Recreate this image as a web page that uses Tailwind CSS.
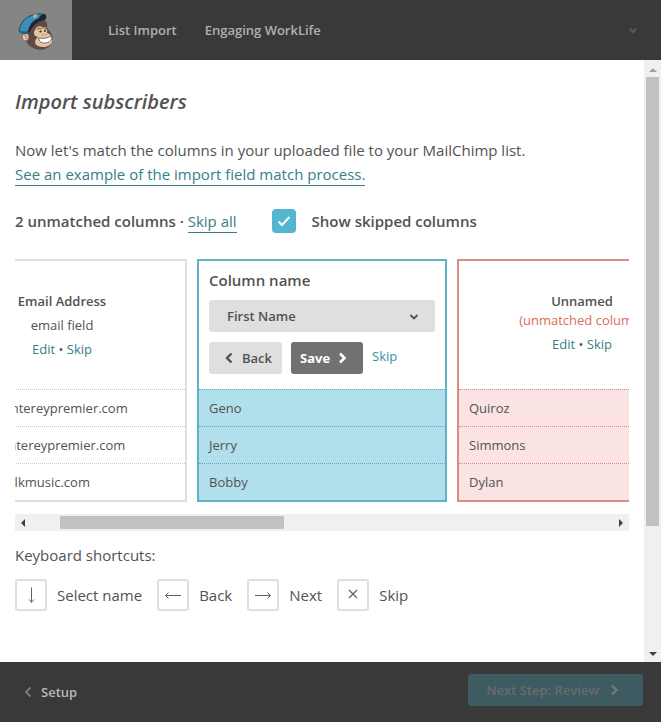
<!DOCTYPE html>
<html lang="en">
<head>
<meta charset="UTF-8">
<meta name="viewport" content="width=device-width, initial-scale=1.0">
<title>Import subscribers</title>
<script src="https://cdn.jsdelivr.net/npm/@tailwindcss/browser@4"></script>
</head>
<body class="flex flex-col h-screen bg-white text-[#525252] text-[15px] leading-6 font-['Open_Sans',sans-serif]">

<header class="flex items-center h-15 shrink-0 bg-[#393939] text-[#b0b0b0] text-[13px] font-semibold">
  <a href="#" aria-label="Home" class="flex items-center justify-center w-18 h-full bg-[#858585]">
    <svg class="w-9 h-10" viewBox="0 0 36 40">
      <path d="M10 16 L24 10 C28 10 30 13 29 17 C30 21 34 22 34.500 27 C35.500 35 29 40 22 39.800 C13 39 9 34 7 29 Z" fill="#604b43"/>
      <path d="M17 20 C19 15 24 16 25 18 C28 16 30 19 29 23 C33 24 35 28 34 32 C32 37 25 38 20 36 C16 34 16 30 20 27 C16 26 15 23 17 20 Z" fill="#e5c4a6"/>
      <ellipse cx="7.500" cy="27" rx="3.400" ry="3.900" fill="#e5c4a6" stroke="#604b43" stroke-width="0.600"/>
      <path d="M6 26 C7.500 24.500 9 26 8.200 29" fill="none" stroke="#a17d69" stroke-width="1"/>
      <path d="M1 21 C2 13 7 7 15 5 C20 3.500 25 3.500 27 5 L26 8 C18 10 12 15 11 23 C8 24 3 24 1 21 Z" fill="#398fb9" stroke="#253343" stroke-width="0.800"/>
      <path d="M1 20 C4 22 7 22 11 20 L11 23 C8 25 3 24.500 1 22 Z" fill="#266181"/>
      <path d="M10 21.500 C11 15 15 10 21 8 C21 6 24 4 27 4.200 C29 6 29 9 26 10.500 C20 11 15 15 11 23 Z" fill="#1c2435"/>
      <path d="M15 5 L19 4 L18.500 7.500 L15.500 8 Z" fill="#c5b481"/>
      <path d="M19 19.500 Q21 17.500 24 19 M26 19 Q28 18 29 19.500" fill="none" stroke="#8d6b55" stroke-width="1.200"/>
      <ellipse cx="22.500" cy="21.500" rx="1.200" ry="0.900" fill="#493629"/>
      <ellipse cx="27" cy="21" rx="1" ry="0.900" fill="#493629"/>
      <path d="M24.500 25 H25.500 M27.500 24.500 H28.500" stroke="#795744" stroke-width="1"/>
      <path d="M20.500 28 C25 29 30 28 33.500 26 C34.500 31 30 33.500 25 33 C22 32.500 21 30.500 20.500 28 Z" fill="#fff" stroke="#674c40" stroke-width="0.800"/>
    </svg>
  </a>
  <nav class="flex gap-7 ml-9">
    <a href="#">List Import</a>
    <a href="#">Engaging WorkLife</a>
  </nav>
  <button type="button" aria-label="Account menu" class="ml-auto mr-6">
    <svg class="w-2 h-2" viewBox="0 0 8 8" fill="none" stroke="#595959" stroke-width="2"><path d="M0.500 2.500 L4 6 L7.500 2.500"/></svg>
  </button>
</header>

<div class="flex flex-1 min-h-0">
  <main class="flex-1 min-w-0 px-[15px] pt-[26px]">
    <h1 class="text-[20px] leading-8 font-semibold italic">Import subscribers</h1>

    <p class="mt-5">Now let's match the columns in your uploaded file to your MailChimp list.<br>
      <a href="#" class="inline-block leading-[22px] text-[#358085] border-b border-[#358085]">See an example of the import field match process.</a></p>

    <div class="flex items-center mt-[23px] font-semibold">
      <p>2 unmatched columns <span>·</span> <a href="#" class="inline-block leading-[22px] font-normal text-[#358085] border-b border-[#358085]">Skip all</a></p>
      <label class="flex items-center gap-4 ml-[35px]">
        <span class="relative w-6 h-6">
          <input type="checkbox" checked class="block appearance-none w-6 h-6 rounded bg-[#54b5d1]">
          <svg class="absolute inset-0 w-6 h-6 pointer-events-none" viewBox="0 0 24 24" fill="none" stroke="#fff" stroke-width="2"><path d="M6.500 12.500 L10 16 L17.500 8"/></svg>
        </span>
        Show skipped columns
      </label>
    </div>

    <!-- imported columns, centred on the one being edited -->
    <div class="flex justify-center gap-2.5 mt-[26px] overflow-hidden text-[13px]">
      <section class="w-[250px] shrink-0 border-2 border-[#dfdfdf]">
        <table class="w-full border-separate border-spacing-0">
          <thead>
            <tr><th class="h-32 p-0 align-middle font-normal">
              <div class="font-semibold">Email Address</div>
              <div>email field</div>
              <div><a href="#" class="text-[#358085]">Edit</a> • <a href="#" class="text-[#358085]">Skip</a></div>
            </th></tr>
          </thead>
          <tbody>
            <tr><td class="h-[37px] px-2.5 py-0 border-t border-dotted border-[#c8c8c8]">geno@montereypremier.com</td></tr>
            <tr><td class="h-[37px] px-2.5 py-0 border-t border-dotted border-[#c8c8c8]">jerry@montereypremier.com</td></tr>
            <tr><td class="h-[37px] px-2.5 py-0 border-t border-dotted border-[#c8c8c8]">bobby@polkmusic.com</td></tr>
          </tbody>
        </table>
      </section>

      <section class="w-[250px] shrink-0 border-2 border-[#5fb2c8]">
        <table class="w-full border-separate border-spacing-0">
          <thead>
            <tr><th class="h-32 px-2.5 pt-[7px] pb-0 align-top text-left font-normal">
              <label for="column-name" class="block text-[15px] font-semibold">Column name</label>
              <div class="relative mt-2">
                <select id="column-name" class="block appearance-none w-full h-8 pl-[18px] rounded-[3px] bg-[#dfdfdf] font-semibold">
                  <option>First Name</option>
                </select>
                <svg class="absolute right-4 top-3 w-2.5 h-2.5 pointer-events-none" viewBox="0 0 10 10" fill="none" stroke="#525252" stroke-width="1.800"><path d="M1.500 3 L5 6.500 L8.500 3"/></svg>
              </div>
              <div class="flex mt-2.5 gap-[9px]">
                <button type="button" class="flex items-center gap-[9px] h-8 pl-4 pr-2.5 rounded-[3px] bg-[#dfdfdf] font-semibold">
                  <svg class="w-2 h-3" viewBox="0 0 8 12" fill="none" stroke="#525252" stroke-width="2.400"><path d="M6.500 1.500 L2 6 L6.500 10.500"/></svg>
                  Back
                </button>
                <button type="button" class="flex items-center gap-[9px] h-8 pl-[9px] pr-4 rounded-[3px] bg-[#717171] text-white font-bold">
                  Save
                  <svg class="w-2 h-3" viewBox="0 0 8 12" fill="none" stroke="#fff" stroke-width="2.600"><path d="M1 1.500 L5.500 6 L1 10.500"/></svg>
                </button>
                <a href="#" class="mt-0.5 text-[#358fa5]">Skip</a>
              </div>
            </th></tr>
          </thead>
          <tbody>
            <tr><td class="h-[37px] px-2.5 py-0 bg-[#b1dfec] border-t border-dotted border-[#5fa9bd]">Geno</td></tr>
            <tr><td class="h-[37px] px-2.5 py-0 bg-[#b1dfec] border-t border-dotted border-[#5fa9bd]">Jerry</td></tr>
            <tr><td class="h-[37px] px-2.5 py-0 bg-[#b1dfec] border-t border-dotted border-[#5fa9bd]">Bobby</td></tr>
          </tbody>
        </table>
      </section>

      <section class="w-[250px] shrink-0 border-2 border-[#d98c80]">
        <table class="w-full border-separate border-spacing-0">
          <thead>
            <tr><th class="h-32 px-0 pt-7 pb-0 align-top font-normal">
              <div class="font-semibold">Unnamed</div>
              <div class="leading-[14px] text-[#dc6c5a]">(unmatched column)</div>
              <div class="mt-[5px]"><a href="#" class="text-[#358085]">Edit</a> • <a href="#" class="text-[#358085]">Skip</a></div>
            </th></tr>
          </thead>
          <tbody>
            <tr><td class="h-[37px] px-2.5 py-0 bg-[#fae3e2] border-t border-dotted border-[#d98c80]">Quiroz</td></tr>
            <tr><td class="h-[37px] px-2.5 py-0 bg-[#fae3e2] border-t border-dotted border-[#d98c80]">Simmons</td></tr>
            <tr><td class="h-[37px] px-2.5 py-0 bg-[#fae3e2] border-t border-dotted border-[#d98c80]">Dylan</td></tr>
          </tbody>
        </table>
      </section>
    </div>

    <div class="flex items-center justify-between h-[17px] mt-3 px-1.5 bg-[#f0f0f0]">
      <svg class="w-1 h-2" viewBox="0 0 4 8" fill="#404040"><path d="M4 0 V8 L0 4 Z"/></svg>
      <div class="flex-1 pl-[35px]"><div class="w-[40%] h-[13px] bg-[#c1c1c1]"></div></div>
      <svg class="w-1 h-2" viewBox="0 0 4 8" fill="#404040"><path d="M0 0 V8 L4 4 Z"/></svg>
    </div>

    <h2 class="mt-3">Keyboard shortcuts:</h2>
    <ul class="flex gap-[15px] mt-3">
      <li class="flex items-center gap-2.5">
        <kbd class="flex items-center justify-center w-8 h-8 border-2 border-[#dfdfdf] rounded-[3px]">
          <svg class="w-4 h-4" viewBox="0 0 16 16" fill="none" stroke="#606060"><path d="M8.500 0.500 V15.500 M6 12.500 L8.500 15.200 L11 12.500"/></svg>
        </kbd>
        Select name
      </li>
      <li class="flex items-center gap-2.5">
        <kbd class="flex items-center justify-center w-8 h-8 border-2 border-[#dfdfdf] rounded-[3px]">
          <svg class="w-4 h-4" viewBox="0 0 16 16" fill="none" stroke="#606060"><path d="M16 8.500 H0.500 M3.500 5.500 L0.500 8.500 L3.500 11.500"/></svg>
        </kbd>
        Back
      </li>
      <li class="flex items-center gap-2.5">
        <kbd class="flex items-center justify-center w-8 h-8 border-2 border-[#dfdfdf] rounded-[3px]">
          <svg class="w-4 h-4" viewBox="0 0 16 16" fill="none" stroke="#606060"><path d="M0 8.500 H15.500 M12.500 5.500 L15.500 8.500 L12.500 11.500"/></svg>
        </kbd>
        Next
      </li>
      <li class="flex items-center gap-2.5">
        <kbd class="flex items-center justify-center w-8 h-8 border-2 border-[#dfdfdf] rounded-[3px]">
          <svg class="w-4 h-4" viewBox="0 0 16 16" fill="none" stroke="#606060" stroke-width="1.200"><path d="M4 3 L12 11 M12 3 L4 11"/></svg>
        </kbd>
        Skip
      </li>
    </ul>
  </main>

  <div class="flex flex-col items-center w-[17px] py-1.5 bg-[#f0f0f0]">
    <svg class="w-2 h-1 mt-0.5" viewBox="0 0 8 4" fill="#a0a0a0"><path d="M0 4 H8 L4 0 Z"/></svg>
    <div class="flex-1 w-[13px] pt-[5px]"><div class="h-[78%] bg-[#c1c1c1]"></div></div>
    <svg class="w-2 h-1" viewBox="0 0 8 4" fill="#404040"><path d="M0 0 H8 L4 4 Z"/></svg>
  </div>
</div>

<footer class="flex items-center justify-between h-15 shrink-0 pl-6 pr-[18px] bg-[#393939] text-[13px] font-semibold">
  <a href="#" class="flex items-center gap-[9px] text-[#b8b8b8]">
    <svg class="w-2 h-3" viewBox="0 0 8 12" fill="none" stroke="#7d7d7d" stroke-width="1.800"><path d="M6.500 1.500 L2 6 L6.500 10.500"/></svg>
    Setup
  </a>
  <button type="button" class="flex items-center gap-3 h-8 mb-1 pl-[18px] pr-6 rounded-[3px] bg-[#3f5b62] text-[#666c6e] font-semibold">
    Next Step: Review
    <svg class="w-2 h-3" viewBox="0 0 8 12" fill="none" stroke="#74797b" stroke-width="2.400"><path d="M1 1.500 L5.500 6 L1 10.500"/></svg>
  </button>
</footer>

</body>
</html>
